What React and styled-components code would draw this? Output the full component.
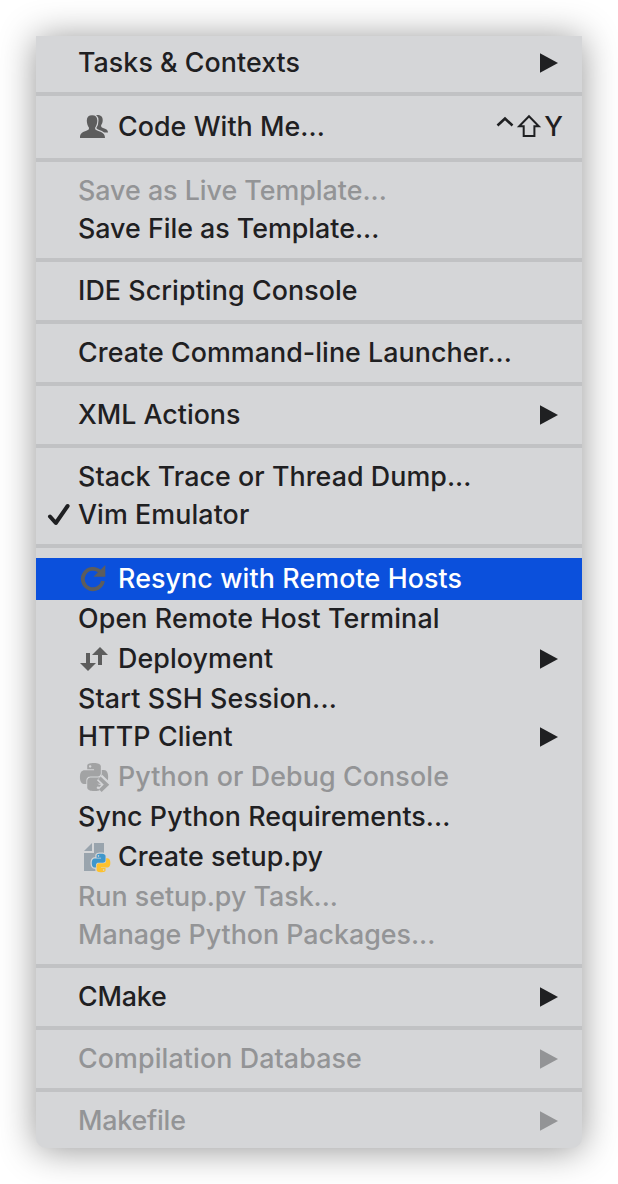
import React from "react";
import styled, { createGlobalStyle, css } from "styled-components";

const GlobalStyle = createGlobalStyle`
  body {
    margin: 0;
    background: #ffffff;
    font-family: Inter, "Liberation Sans", sans-serif;
  }
`;

const Stage = styled.div`
  box-sizing: border-box;
  width: 618px;
  height: 1184px;
  padding: 36px;
  overflow: hidden;
`;

const Menu = styled.div`
  width: 546px;
  background: #d5d6d8;
  border-radius: 0 0 10px 10px;
  box-shadow: 0 2px 36px rgba(0, 0, 0, 0.42);
`;

const Section = styled.div`
  padding: 10px 0;
  &:first-child {
    padding-top: 8px;
  }
  &:last-child {
    padding-bottom: 8px;
  }
  & + & {
    border-top: 4px solid #c1c2c4;
  }
`;

const Row = styled.div`
  display: flex;
  align-items: center;
  height: ${(p) => (p.$tall ? 42 : 38)}px;
  padding-right: 24px;
  color: ${(p) => (p.$disabled ? "#939496" : "#1f2022")};
  ${(p) =>
    p.$active &&
    css`
      background: #0b50dc;
      color: #ffffff;
    `}
`;

const CheckSlot = styled.div`
  display: flex;
  flex: none;
  width: 42px;
  padding-left: 11px;
  box-sizing: border-box;
`;

const IconSlot = styled.div`
  display: flex;
  flex: none;
  width: 40px;
`;

const Label = styled.span`
  flex: 1;
  font-size: 26.8px;
  font-weight: 450;
  line-height: 36px;
  padding-bottom: 2px;
  white-space: nowrap;
  letter-spacing: ${(p) => p.$spacing || 0}px;
`;

const Shortcut = styled.span`
  display: flex;
  align-items: center;
  gap: 3px;
  padding-bottom: 2px;
  margin-right: -5px;
  font-size: 26.8px;
  font-weight: 450;
  line-height: 36px;
`;

const Icon = styled.svg`
  display: block;
  flex: none;
  overflow: visible;
`;

const Check = () => (
  <Icon width="24" height="24" viewBox="0 0 24 24">
    <path d="M3 13.5 8.8 20 20.6 3" fill="none" stroke="currentColor" strokeWidth="4" strokeLinecap="round" strokeLinejoin="round" />
  </Icon>
);

const Arrow = () => (
  <Icon width="18" height="20" viewBox="0 0 18 20">
    <path d="M0 .3 18 10 0 19.7Z" fill="currentColor" />
  </Icon>
);

const People = () => (
  <Icon width="32" height="32" viewBox="0 0 32 32">
    <path
      d="M17.500 4.200c4.500-.6 7.500 1.300 7.200 5.200-.1 2.200-.8 3.600-1.600 4.800-.1 1.800.6 2.300 2.600 3 2.800.9 4.300 1.700 4.300 4.300H17Z"
      fill="#5d5d5d"
    />
    <path
      d="M2 27c0-4.400 1.600-5.500 5.800-7 2.500-.8 3.300-1.400 3.200-3.200-1.300-1.700-2.200-4.500-2.200-7.300C8.800 6 10.700 4.200 14.100 4.200s5.200 1.800 5.200 5.300c0 2.800-.9 5.600-2.200 7.300-.1 1.800.7 2.400 3.200 3.200 4.200 1.500 6.700 2.600 6.700 7Z"
      fill="#5d5d5d"
      stroke="#d5d6d8"
      strokeWidth="2.400"
      paintOrder="stroke"
    />
  </Icon>
);

const Resync = () => (
  <Icon width="32" height="32" viewBox="0 0 32 32">
    <path d="M25 18A10.200 10.200 0 1 1 22.200 8.800" fill="none" stroke="#5d5d5d" strokeWidth="3.800" />
    <path d="M27.300 2V13.800H15.500Z" fill="#5d5d5d" />
  </Icon>
);

const Transfer = () => (
  <Icon width="32" height="32" viewBox="0 0 32 32">
    <path d="M8 10h4v10h6l-8 8-8-8h6Z" fill="#5d5d5d" />
    <path d="m22 4 8 8h-6v10h-4V12h-6Z" fill="#5d5d5d" />
  </Icon>
);

const SNAKE =
  "M14.250.18l.9.2.73.26.59.3.45.32.34.34.25.34.16.33.1.3.04.26.02.2-.01.13V8.500l-.05.63-.13.55-.21.46-.26.38-.3.31-.33.25-.35.19-.35.14-.33.1-.3.07-.26.04-.21.02H8.770l-.69.05-.59.14-.5.22-.41.27-.33.32-.27.35-.2.36-.15.37-.1.35-.07.32-.04.27-.02.21v3.060H3.170l-.21-.03-.28-.07-.32-.12-.35-.18-.36-.26-.36-.36-.35-.46-.32-.59-.28-.73-.21-.88-.14-1.050-.05-1.230.06-1.220.16-1.040.24-.87.32-.71.36-.57.4-.44.42-.33.42-.24.4-.16.36-.1.32-.05.24-.01h.16l.06.01h8.160v-.83H6.180l-.01-2.750-.02-.37.05-.34.11-.31.17-.28.25-.26.31-.23.38-.2.44-.18.51-.15.58-.12.64-.1.71-.06.77-.04.84-.02 1.270.05zm-6.300 1.980l-.23.33-.08.41.08.41.23.34.33.22.41.09.41-.09.33-.22.23-.34.08-.41-.08-.41-.23-.33-.33-.22-.41-.09-.41.09z";

const PythonConsole = () => (
  <Icon width="32" height="32" viewBox="0 0 32 32">
    <g transform="translate(2 2) scale(1.170)" fill="#a2a3a4">
      <path d={SNAKE} />
      <path d={SNAKE} transform="rotate(180 12 12)" />
    </g>
    <path d="m21.500 16.500 7.500 7.200-6.500 6.300" fill="none" stroke="#d5d6d8" strokeWidth="7.500" />
    <path d="m17.600 20.500 3.200 3.200-3.200 3.200-3.200-3.200Z" fill="#a2a3a4" />
    <path d="m21.500 17 7 6.700-6.200 6" fill="none" stroke="#a2a3a4" strokeWidth="3.800" />
  </Icon>
);

const SetupFile = () => (
  <Icon width="32" height="32" viewBox="0 0 32 32">
    <path d="M14 2v8H6Z" fill="#99a4ad" />
    <path d="M16 2v10H6v18h20V2Z" fill="#99a4ad" />
    <g transform="translate(13.800 12.700) scale(.77)">
      <g stroke="#d5d6d8" strokeWidth="3.200" strokeLinejoin="round">
        <path d={SNAKE} />
        <path d={SNAKE} transform="rotate(180 12 12)" />
      </g>
      <path d={SNAKE} fill="#3f97cb" />
      <path d={SNAKE} fill="#fdc12e" transform="rotate(180 12 12)" />
    </g>
  </Icon>
);

const ControlKey = () => (
  <Icon width="18" height="24" viewBox="0 0 18 24">
    <path d="m1.500 11.500 7.500-7 7.500 7" fill="none" stroke="currentColor" strokeWidth="2.600" />
  </Icon>
);

const ShiftKey = () => (
  <Icon width="24" height="24" viewBox="0 0 24 24">
    <path d="M12 2.200 21.800 12.300H17.400V22H6.700V12.300H2.200Z" fill="none" stroke="currentColor" strokeWidth="2" />
  </Icon>
);

const SECTIONS = [
  [{ label: "Tasks & Contexts", submenu: true, spacing: 0.06 }],
  [{ label: "Code With Me...", icon: People, shortcut: "Y", spacing: 0.07 }],
  [{ label: "Save as Live Template...", disabled: true }, { label: "Save File as Template..." }],
  [{ label: "IDE Scripting Console", spacing: 0.1 }],
  [{ label: "Create Command-line Launcher...", spacing: 0.07 }],
  [{ label: "XML Actions", submenu: true }],
  [
    { label: "Stack Trace or Thread Dump...", spacing: 0.07 },
    { label: "Vim Emulator", checked: true, spacing: 0.1 },
  ],
  [
    { label: "Resync with Remote Hosts", icon: Resync, active: true, spacing: 0.13 },
    { label: "Open Remote Host Terminal", spacing: 0.15 },
    { label: "Deployment", icon: Transfer, submenu: true, spacing: 0.1 },
    { label: "Start SSH Session...", spacing: 0.15 },
    { label: "HTTP Client", submenu: true, spacing: 0.13 },
    { label: "Python or Debug Console", icon: PythonConsole, disabled: true, spacing: 0.13 },
    { label: "Sync Python Requirements...", spacing: 0.08 },
    { label: "Create setup.py", icon: SetupFile, spacing: 0.07 },
    { label: "Run setup.py Task...", disabled: true },
    { label: "Manage Python Packages...", disabled: true },
  ],
  [{ label: "CMake", submenu: true, spacing: -0.15 }],
  [{ label: "Compilation Database", submenu: true, disabled: true, spacing: 0.12 }],
  [{ label: "Makefile", submenu: true, disabled: true, spacing: -0.2 }],
];

function MenuItem({ item }) {
  const ItemIcon = item.icon;
  return (
    <Row $tall={Boolean(ItemIcon)} $disabled={item.disabled} $active={item.active}>
      <CheckSlot>{item.checked && <Check />}</CheckSlot>
      {ItemIcon && (
        <IconSlot>
          <ItemIcon />
        </IconSlot>
      )}
      <Label $spacing={item.spacing}>{item.label}</Label>
      {item.shortcut && (
        <Shortcut>
          <ControlKey />
          <ShiftKey />
          {item.shortcut}
        </Shortcut>
      )}
      {item.submenu && <Arrow />}
    </Row>
  );
}

export default function App() {
  return (
    <>
      <GlobalStyle />
      <Stage>
        <Menu>
          {SECTIONS.map((items) => (
            <Section key={items[0].label}>
              {items.map((item) => (
                <MenuItem key={item.label} item={item} />
              ))}
            </Section>
          ))}
        </Menu>
      </Stage>
    </>
  );
}
